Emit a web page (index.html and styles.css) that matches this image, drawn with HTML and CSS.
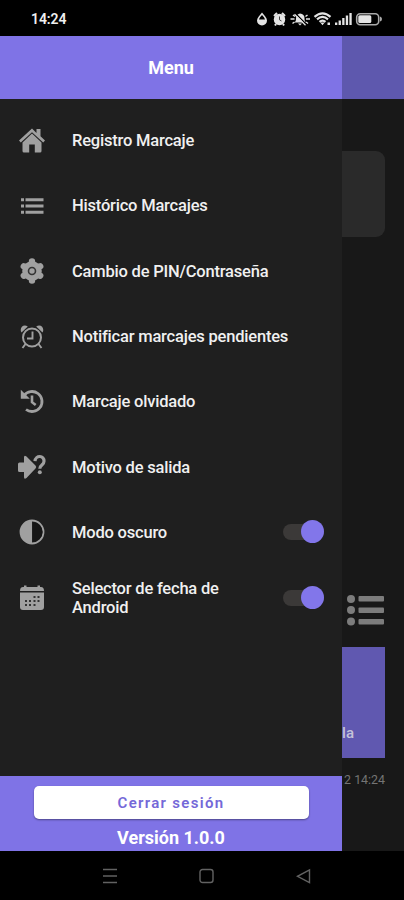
FILE: index.html
```html
<!DOCTYPE html>
<html lang="es">
<head>
    <meta charset="UTF-8">
    <meta name="viewport" content="width=device-width, initial-scale=1.0">
    <title>Menu</title>
    <link rel="stylesheet" href="styles.css">
</head>
<body>
    <div class="status-bar">
        <span class="clock">14:24</span>
        <svg class="status-icons" width="126" height="16" viewBox="0 0 126 16" fill="#e4e4e4">
            <path d="M5 1.500C7 4 10 7 10 9.500a5 5 0 0 1-10 0C0 7 3 4 5 1.500z"/>
            <path d="M5 4C6.500 5.800 7.700 7 8 8.500H2C2.300 7 3.500 5.800 5 4z" fill="#000"/>
            <circle cx="22.500" cy="8.500" r="5.700"/>
            <path d="M17 5l3-3M28 5l-3-3M19 13l-1 1.500M26 13l1 1.500" stroke="#e4e4e4" stroke-width="2"/>
            <path d="M22.500 5.500v3.300l2 1.200" stroke="#444" fill="none"/>
            <path d="M37.500 11.500c1.500-1 1.500-3 1.500-4.500C39.500 4 41 3 43 2.500c3 .5 4.500 2 4.500 4.500s0 3.500 2 4.500zM41 12.500h4l-2 2z"/>
            <path d="M33.500 8h4M49 8h4M36 4l2 1.500M50.500 4l-2 1.500M35.500 12.500l2-1.500M51 12.500l-2-1.500" stroke="#e4e4e4" stroke-width="1.500"/>
            <path d="M38.500 2.500l11 11" stroke="#000" stroke-width="1.200"/>
            <path d="M37.500 3.200l11 11" stroke="#e4e4e4" stroke-width="1.300"/>
            <path d="M57.500 5.800q8-7 16 0M60 8.300q5.500-4.700 11 0M62.500 10.800q3-2.500 6 0" fill="none" stroke="#e4e4e4" stroke-width="2.200"/>
            <path d="M63.300 11.500h4.400l-2.200 2.800zM70.500 11.500h2.500v2.500h-2.500zM78 11.500h2.300v2.500H78zM81.600 9.500h2.300V14h-2.300zM85.200 7h2.300v7h-2.300zM88.800 4.500h2.300V14h-2.300zM92.400 2h2.300v12h-2.300z"/>
            <rect x="99.700" y="2.700" width="22" height="11" rx="3.500" fill="none" stroke="#aaa" stroke-width="1.600"/>
            <rect x="101.300" y="4.300" width="13" height="7.800" rx="1.500"/>
            <path d="M123 5.500v5q2-.5 2-2.500t-2-2.500z" fill="#aaa"/>
        </svg>
    </div>

    <div class="app">
        <main class="page">
            <div class="page-header"></div>
            <div class="page-card"></div>
            <svg class="list-icon" width="38" height="34" viewBox="0 0 38 34" fill="#7c7c7c">
                <circle cx="4" cy="6" r="4"/>
                <circle cx="4" cy="17" r="4"/>
                <circle cx="4" cy="28.500" r="4"/>
                <rect x="11.500" y="3" width="25.500" height="5.500" rx="1"/>
                <rect x="11.500" y="14.500" width="25.500" height="5.500" rx="1"/>
                <rect x="11.500" y="26" width="25.500" height="5.500" rx="1"/>
            </svg>
            <div class="page-tile">la</div>
            <div class="page-date">2 14:24</div>
        </main>

        <aside class="drawer">
            <header class="drawer-header">Menu</header>
            <nav class="menu">
                <div class="item">
                    <svg class="icon" viewBox="0 0 26 26">
                        <path d="M21.500 1h-4v4L13 .5 0 12.500l1.800 2L13 4.300l11.200 10.200 1.800-2-4.500-4.200z"/>
                        <path d="M13 5.500L3.500 14.500V23q0 1.500 1.500 1.500h5.200v-8h5.600v8H21q1.500 0 1.500-1.500v-8.500z"/>
                    </svg>
                    <span class="label">Registro Marcaje</span>
                </div>
                <div class="item">
                    <svg class="icon" viewBox="0 0 26 26">
                        <path d="M2 5.200h3v3H2zM6.500 5.200H24.500v3h-18zM2 11.500h3v3H2zM6.500 11.500H24.500v3h-18zM2 17.800h3v3H2zM6.500 17.800H24.500v3h-18z"/>
                    </svg>
                    <span class="label">Histórico Marcajes</span>
                </div>
                <div class="item">
                    <svg class="icon" viewBox="0 0 26 26">
                        <circle cx="13" cy="13" r="9.800"/>
                        <path d="M13 3.500v19M4.800 8.250l16.400 9.500M21.200 8.250l-16.400 9.500" stroke="#a0a0a0" stroke-width="6.400" stroke-linecap="round"/>
                        <circle cx="13" cy="13" r="3.500" fill="#a0a0a0" stroke="#333" stroke-width="1.600"/>
                    </svg>
                    <span class="label">Cambio de PIN/Contraseña</span>
                </div>
                <div class="item">
                    <svg class="icon" viewBox="0 0 26 26">
                        <circle cx="13" cy="13.500" r="9" fill="none" stroke="#a0a0a0" stroke-width="2"/>
                        <path d="M13.500 7.500v7H8M6.500 20l-3 4M19.500 20l3 4" fill="none" stroke="#a0a0a0" stroke-width="1.900"/>
                        <path d="M2.500 8.500C0 4.500 4-.5 8.800 2.500zM23.500 8.500c2.500-4-1.500-9-6.300-6z"/>
                    </svg>
                    <span class="label">Notificar marcajes pendientes</span>
                </div>
                <div class="item">
                    <svg class="icon" viewBox="0 0 26 26">
                        <path d="M5 6.500A10 10 0 1 1 7 20.500" fill="none" stroke="#a0a0a0" stroke-width="2.800"/>
                        <path d="M1.800.8v9h9z"/>
                        <path d="M13 6.500v6.700l3.700 2.800" fill="none" stroke="#a0a0a0" stroke-width="2.600"/>
                    </svg>
                    <span class="label">Marcaje olvidado</span>
                </div>
                <div class="item">
                    <svg class="icon icon-wide" viewBox="0 0 30 26">
                        <path d="M1 10q0-1.500 1.500-1.500H7V3.500q0-3 2.500-1l9 9q1.500 1.500 0 3l-9 9.500q-2.500 2-2.500-1v-5H2.500Q1 18 1 16.500z"/>
                        <path d="M18 7.200c.5-6.500 9.500-6 9 0 0 4-4.200 3.500-4.200 7.500" fill="none" stroke="#a0a0a0" stroke-width="3.200"/>
                        <circle cx="22.800" cy="18.200" r="2"/>
                    </svg>
                    <span class="label">Motivo de salida</span>
                </div>
                <div class="item">
                    <svg class="icon" viewBox="0 0 26 26">
                        <circle cx="13" cy="13" r="11.500" fill="none" stroke="#a0a0a0" stroke-width="1.800"/>
                        <path d="M13 1.500a11.500 11.500 0 0 0 0 23z"/>
                        <path d="M13.800 3.300a9.700 9.700 0 0 1 0 19.400z" fill="#151515"/>
                    </svg>
                    <span class="label">Modo oscuro</span>
                    <span class="toggle"></span>
                </div>
                <div class="item">
                    <svg class="icon" viewBox="0 0 26 26">
                        <path d="M5 .5h2.500V2h11V.5H21V2h1q3 0 3 4H1q0-4 3-4h1z"/>
                        <path d="M1 7.500h24V22q0 3-3 3H4q-3 0-3-3z"/>
                        <path d="M14.500 11h2v2h-2zM18.500 11h2v2h-2zM6 15h2v2H6zM10 15h2v2h-2zM14.500 15h2v2h-2zM18.500 15h2v2h-2zM6 19h2v2H6zM10 19h2v2h-2zM14.500 19h2v2h-2z" fill="#333"/>
                    </svg>
                    <span class="label">Selector de fecha de Android</span>
                    <span class="toggle"></span>
                </div>
            </nav>
            <footer class="drawer-footer">
                <button class="logout">Cerrar sesión</button>
                <div class="version">Versión 1.0.0</div>
            </footer>
        </aside>
    </div>

    <div class="nav-bar">
        <svg width="16" height="16" viewBox="0 0 16 16"><path d="M1 1.500h14M1 8h14M1 14.500h14"/></svg>
        <svg width="16" height="16" viewBox="0 0 16 16"><rect x="1" y="1.500" width="13" height="13" rx="2.500"/></svg>
        <svg width="16" height="16" viewBox="0 0 16 16"><path d="M13.500 2v12.500L1.500 8.300z"/></svg>
    </div>
</body>
</html>
```

FILE: styles.css
```css
* {
    box-sizing: border-box;
}
body {
    margin: 0;
    height: 900px;
    display: flex;
    flex-direction: column;
    overflow: hidden;
    background-color: #000;
    color: #f0f0f0;
    font-family: Roboto, "Liberation Sans", sans-serif;
}
.status-bar {
    height: 36px;
    display: flex;
    align-items: center;
    justify-content: space-between;
    padding: 2px 21px 0 31px;
}
.clock {
    font-size: 14px;
    font-weight: 600;
    letter-spacing: -0.1px;
}
.app {
    position: relative;
    height: 815px;
    background-color: #181818;
}

/* page behind the drawer */
.page {
    display: flex;
    flex-direction: column;
    height: 100%;
}
.page-header {
    height: 63px;
    background-color: #5e58ae;
}
.page-card {
    height: 86px;
    margin: 52px 19px 0;
    border-radius: 9px;
    background-color: #2a2a2a;
}
.list-icon {
    align-self: flex-end;
    margin: 356px 19px 0 0;
}
.page-tile {
    height: 111px;
    margin: 20px 19px 0;
    padding: 77px 31px 0 0;
    background-color: #6058b0;
    color: #c4c2d8;
    font-size: 15px;
    font-weight: 500;
    line-height: 18px;
    text-align: right;
}
.page-date {
    margin: 13px 19px 0;
    color: #747474;
    font-size: 12.4px;
    line-height: 18px;
    text-align: right;
}

.drawer {
    position: absolute;
    top: 0;
    left: 0;
    width: 342px;
    height: 100%;
    display: flex;
    flex-direction: column;
    background-color: #1f1f1f;
}
.drawer-header {
    height: 63px;
    background-color: #7f73e6;
    color: #fff;
    font-size: 18px;
    font-weight: 700;
    line-height: 64px;
    text-align: center;
}
.menu {
    flex: 1;
    padding-top: 9px;
}
.item {
    height: 65.3px;
    display: flex;
    align-items: center;
    padding: 0 18px 0 19px;
}
.icon {
    flex: none;
    width: 26px;
    height: 26px;
    margin-right: 27px;
    fill: #a0a0a0;
}
.icon-wide {
    width: 30px;
    margin: 0 25px 0 -2px;
}
.label {
    width: 230px;
    font-size: 16.5px;
    font-weight: 500;
    letter-spacing: -0.2px;
    line-height: 19px;
}
.toggle {
    position: relative;
    flex: none;
    width: 41px;
    height: 16px;
    margin-left: auto;
    border-radius: 8px;
    background-color: #3b3938;
}
.toggle::after {
    content: "";
    position: absolute;
    top: -4px;
    right: 0;
    width: 23px;
    height: 23px;
    border-radius: 50%;
    background-color: #8276ea;
}
.item:has(.toggle) .label {
    width: 170px;
}
.drawer-footer {
    height: 75px;
    padding-top: 10px;
    background-color: #7f73e6;
    color: #fff;
    text-align: center;
}
.logout {
    display: block;
    width: 275px;
    height: 33px;
    margin: 0 auto;
    border: none;
    border-radius: 5px;
    background-color: #fff;
    box-shadow: 0 1px 2px rgba(0,0,0,0.4);
    color: #7468d8;
    font-family: inherit;
    font-size: 15px;
    font-weight: 600;
    letter-spacing: 1.3px;
}
.version {
    margin-top: 8px;
    font-size: 18px;
    font-weight: 700;
    line-height: 21px;
}
.nav-bar {
    flex: 1;
    display: flex;
    align-items: center;
    gap: 81px;
    padding-left: 102px;
}
.nav-bar svg {
    fill: none;
    stroke: #626262;
    stroke-width: 1.4;
}
```
